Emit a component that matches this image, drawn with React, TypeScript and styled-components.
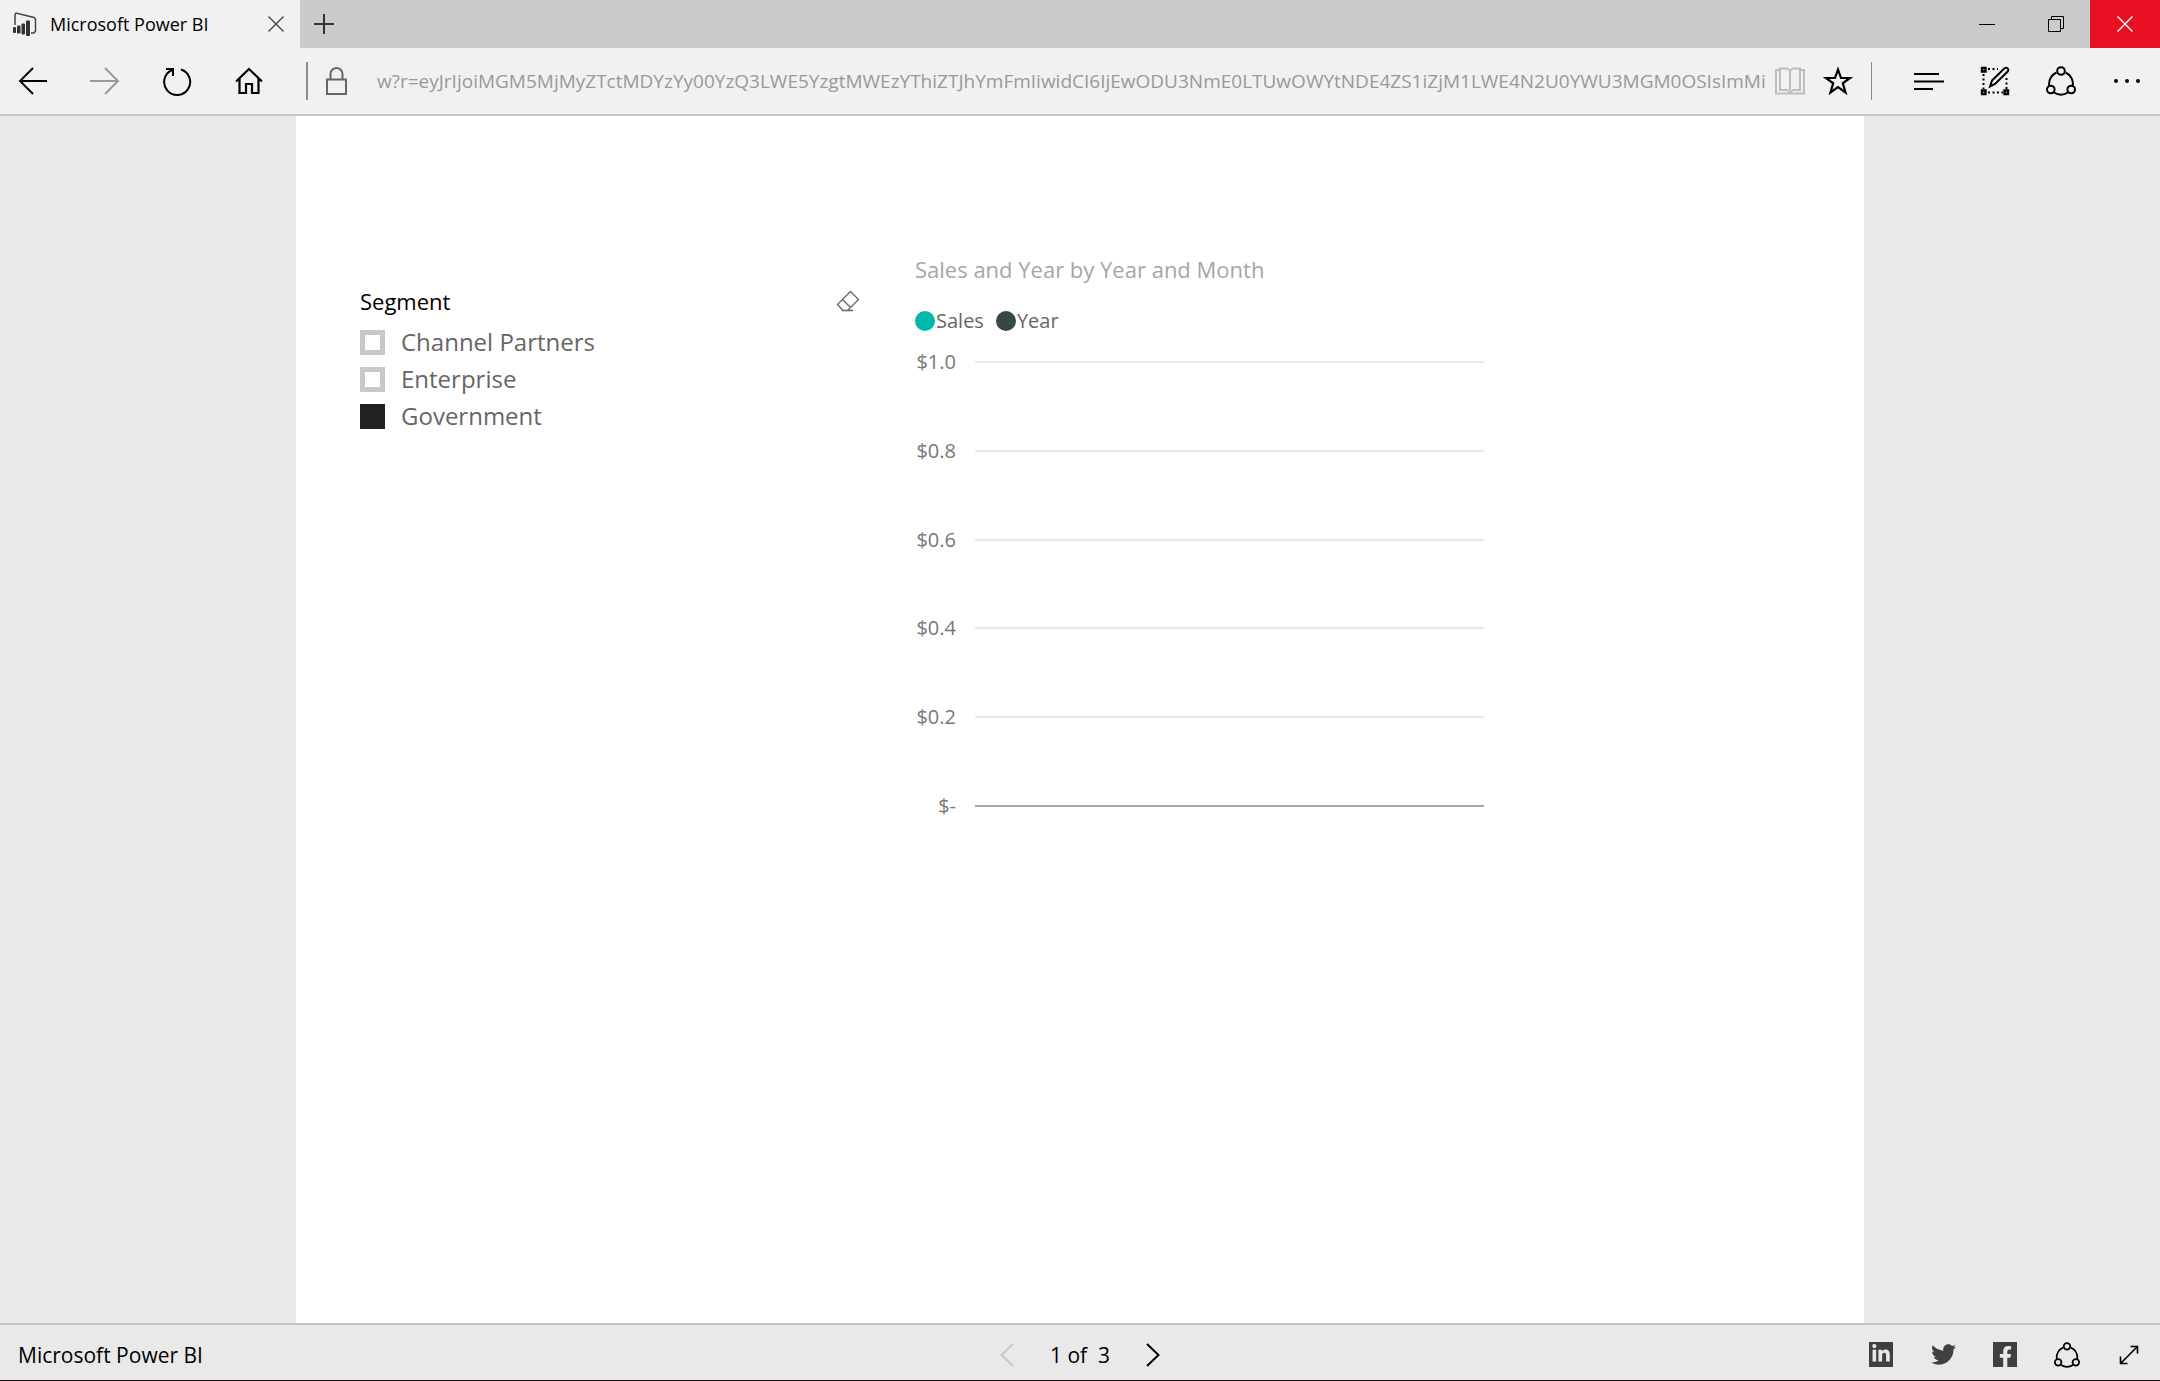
import React, { useState } from "react";
import styled, { createGlobalStyle } from "styled-components";
import { FaFacebookF, FaLinkedinIn, FaTwitter } from "react-icons/fa";

const GlobalStyle = createGlobalStyle`
  * { box-sizing: border-box; }
  body { margin: 0; font-family: "Open Sans", "Noto Sans", sans-serif; color: #000; }
  button, input { font: inherit; color: inherit; }
`;

const Window = styled.div`
  display: flex;
  flex-direction: column;
  min-height: 100vh;
  background: #e9e9e9;
  border-bottom: 1px solid #151010;
`;

const TitleBar = styled.header`
  display: flex;
  height: 48px;
  background: #cbcbcb;
`;

const Tab = styled.div`
  display: flex;
  align-items: center;
  gap: 13px;
  width: 300px;
  padding: 0 16px 0 12px;
  background: #f1f1f1;
  font-size: 18px;
  line-height: 48px;
  white-space: nowrap;
`;

const TabTitle = styled.span`
  flex: 1;
`;

const IconButton = styled.button<{ $width?: number; $color?: string }>`
  display: flex;
  align-items: center;
  justify-content: center;
  flex: none;
  width: ${(p) => p.$width ?? 30}px;
  padding: 0;
  border: 0;
  background: none;
  color: ${(p) => p.$color ?? "#000"};
`;

const WindowButtons = styled.div`
  display: flex;
  margin-left: auto;
`;

const CloseButton = styled(IconButton)`
  background: #e81123;
  color: #fff;
`;

const Toolbar = styled.nav`
  display: flex;
  align-items: center;
  height: 68px;
  padding: 0 18px;
  background: #f1f1f1;
  border-bottom: 2px solid #c8c8c8;
`;

const ToolGroup = styled.div<{ $gap: number }>`
  display: flex;
  align-items: center;
  gap: ${(p) => p.$gap}px;
`;

const Divider = styled.span<{ $thin?: boolean }>`
  flex: none;
  width: ${(p) => (p.$thin ? 1 : 2)}px;
  height: 38px;
  background: #8c8c8c;
`;

const Address = styled.label`
  display: flex;
  align-items: center;
  flex: 1;
  gap: 30px;
  min-width: 0;
  padding: 0 4px 0 18px;
`;

const AddressInput = styled.input`
  flex: 1;
  min-width: 0;
  padding: 0;
  border: 0;
  outline: 0;
  background: none;
  color: #999;
  font-size: 19px;
  line-height: 28px;
`;

const Actions = styled(ToolGroup)`
  padding-left: 42px;
`;

const Stage = styled.main`
  display: flex;
  justify-content: center;
  flex: 1;
`;

const ReportPage = styled.section`
  display: grid;
  grid-template-columns: 500px 571px;
  align-content: start;
  column-gap: 55px;
  width: 100%;
  max-width: 1568px;
  padding: 137px 64px 0;
  background: #fff;
`;

const Slicer = styled.fieldset`
  min-width: 0;
  margin: 0;
  padding: 32px 0 0;
  border: 0;
`;

const SlicerHeader = styled.div`
  display: flex;
  align-items: center;
  justify-content: space-between;
  height: 32px;
  margin-bottom: 6px;
`;

const SlicerTitle = styled.span`
  font-size: 22px;
  line-height: 32px;
`;

const Option = styled.label`
  display: flex;
  align-items: center;
  gap: 16px;
  height: 37px;
  color: #666;
  font-size: 24px;
  line-height: 37px;
`;

const CheckBox = styled.input`
  appearance: none;
  width: 25px;
  height: 25px;
  margin: 2px 0 0;
  border: 5px solid #c8c8c8;
  background: #fff;
  &:checked {
    border-color: #212121;
    background: #212121;
  }
`;

const ChartTitle = styled.h2`
  margin: 0;
  color: #a6a6a6;
  font-size: 22px;
  font-weight: 400;
  line-height: 32px;
`;

const Legend = styled.ul`
  display: flex;
  gap: 12px;
  margin: 22px 0 13px;
  padding: 0;
  list-style: none;
  color: #666;
  font-size: 20px;
  line-height: 28px;
`;

const LegendItem = styled.li<{ $color: string }>`
  display: flex;
  align-items: center;
  gap: 1px;
  &::before {
    content: "";
    width: 20px;
    height: 20px;
    border-radius: 50%;
    background: ${(p) => p.$color};
  }
`;

const Plot = styled.div`
  display: flex;
  flex-direction: column;
  justify-content: space-between;
  height: 472px;
`;

const Tick = styled.div<{ $base: boolean }>`
  display: grid;
  grid-template-columns: 41px 509px;
  align-items: center;
  column-gap: 19px;
  color: #777;
  font-size: 20px;
  line-height: 28px;
  text-align: right;
  &::after {
    content: "";
    height: 2px;
    background: ${(p) => (p.$base ? "#a6a6a6" : "#e9e9e9")};
  }
`;

const Footer = styled.footer`
  display: grid;
  grid-template-columns: 1fr auto 1fr;
  align-items: center;
  height: 57px;
  padding: 4px 18px 0;
  border-top: 2px solid #c3c3c3;
  font-size: 21px;
  font-weight: 500;
  line-height: 28px;
`;

const Pager = styled.div`
  display: flex;
  align-items: center;
  justify-content: space-between;
  width: 160px;
`;

const PageCount = styled.span`
  white-space: pre;
`;

const ShareLinks = styled.div`
  display: flex;
  align-items: center;
  justify-content: flex-end;
  gap: 36px;
`;

const Badge = styled.span<{ $end?: boolean }>`
  display: flex;
  align-items: flex-end;
  justify-content: ${(p) => (p.$end ? "flex-end" : "center")};
  width: 24px;
  height: 25px;
  padding: ${(p) => (p.$end ? "0 1px 0 0" : "0 0 3px")};
  background: #404040;
  color: #e9e9e9;
`;

type IconProps = {
  w: number;
  h: number;
  stroke?: number;
  children: React.ReactNode;
};

const Icon = ({ w, h, stroke = 2, children }: IconProps) => (
  <svg width={w} height={h} viewBox={`0 0 ${w} ${h}`} fill="none" stroke="currentColor" strokeWidth={stroke} aria-hidden="true">
    {children}
  </svg>
);

const PowerBiIcon = () => (
  <Icon w={25} h={26} stroke={1.5}>
    <path d="M3 14V3.500L4 2l18 4.500 1.500 1.500V20l-1.500 2H19" stroke="#444" />
    <g fill="#333" stroke="none">
      <rect x="1" y="16" width="3" height="6" rx="1" />
      <rect x="5" y="14.500" width="3.500" height="8" rx="1" />
      <rect x="9.500" y="12.500" width="3.500" height="11" rx="1" />
      <rect x="14" y="9.500" width="4" height="15.500" rx="1" />
    </g>
  </Icon>
);

const Cross = () => (
  <Icon w={16} h={16} stroke={1.4}>
    <path d="M.5.5l15 15M15.500.5l-15 15" />
  </Icon>
);

const ShareRing = ({ size = 30 }: { size?: number }) => (
  <svg width={size} height={size} viewBox="0 0 30 30" fill="none" stroke="currentColor" strokeWidth="2" aria-hidden="true">
    <path d="M10.500 6.500A12.500 12.500 0 0 0 3.200 19.500M19.500 6.500A12.500 12.500 0 0 1 26.800 19.500M8 26.500a13 13 0 0 0 14 0" />
    <circle cx="15" cy="5" r="3.800" />
    <circle cx="4.800" cy="23.500" r="3.800" />
    <circle cx="25.200" cy="23.500" r="3.800" />
  </svg>
);

const Chevron = ({ back = false }: { back?: boolean }) => (
  <Icon w={14} h={24}>
    <path d={back ? "M13 1L1.500 12 13 23" : "M1 1l11.500 11L1 23"} />
  </Icon>
);

const address =
  "w?r=eyJrIjoiMGM5MjMyZTctMDYzYy00YzQ3LWE5YzgtMWEzYThiZTJhYmFmIiwidCI6IjEwODU3NmE0LTUwOWYtNDE4ZS1iZjM1LWE4N2U0YWU3MGM0OSIsImMi";

const segments = ["Channel Partners", "Enterprise", "Government"];
const ticks = ["$1.0", "$0.8", "$0.6", "$0.4", "$0.2", "$-"];

export default function App() {
  const [selected, setSelected] = useState<string[]>(["Government"]);
  const toggle = (name: string) =>
    setSelected((now) => (now.includes(name) ? now.filter((n) => n !== name) : [...now, name]));

  return (
    <Window>
      <GlobalStyle />
      <TitleBar>
        <Tab>
          <PowerBiIcon />
          <TabTitle>Microsoft Power BI</TabTitle>
          <IconButton $width={16} $color="#444" aria-label="Close tab"><Cross /></IconButton>
        </Tab>
        <IconButton $width={48} $color="#333" aria-label="New tab">
          <Icon w={20} h={20}><path d="M0 10h20M10 0v20" /></Icon>
        </IconButton>
        <WindowButtons>
          <IconButton $width={69} aria-label="Minimize">
            <Icon w={16} h={16} stroke={1}><path d="M0 8.500h16" /></Icon>
          </IconButton>
          <IconButton $width={69} aria-label="Restore">
            <Icon w={16} h={16} stroke={1}><path d="M.5 3.500h12v12H.5zM3.500 3.500v-3h12v12h-3" /></Icon>
          </IconButton>
          <CloseButton $width={70} aria-label="Close"><Cross /></CloseButton>
        </WindowButtons>
      </TitleBar>

      <Toolbar>
        <ToolGroup $gap={42}>
          <IconButton aria-label="Back">
            <Icon w={30} h={28}><path d="M29 14H2M15 1L2 14l13 13" /></Icon>
          </IconButton>
          <IconButton $color="#999" aria-label="Forward">
            <Icon w={30} h={28}><path d="M0 14h28M15 1l13 13-13 13" /></Icon>
          </IconButton>
          <IconButton aria-label="Refresh">
            <Icon w={30} h={30}>
              <path d="M19 3.500A13 13 0 1 1 10 4M4 3h7v7" />
            </Icon>
          </IconButton>
          <IconButton aria-label="Home">
            <Icon w={30} h={28}>
              <path d="M2 14.500L15 2l13 12.500M5.500 11.500V26H12v-9h6v9h6.500V11.500" strokeWidth="2.200" />
            </Icon>
          </IconButton>
          <Divider />
        </ToolGroup>
        <Address>
          <Icon w={21} h={28}>
            <g stroke="#666">
              <path d="M1 12.500h19V27H1zM4.500 12.500V7a6 6 0 0 1 12 0v5.500" />
            </g>
          </Icon>
          <AddressInput aria-label="Address" defaultValue={address} spellCheck={false} />
        </Address>
        <ToolGroup $gap={18}>
          <IconButton $color="#bdbdbd" aria-label="Reading view">
            <Icon w={30} h={28}>
              <path d="M5 3H1v23.500h28V3h-4M15 3v20M5 1.500h7l3 2 3-2h7V23h-7l-3 2-3-2H5z" />
            </Icon>
          </IconButton>
          <IconButton aria-label="Favorites">
            <Icon w={30} h={30}>
              <path d="M15 3.500l3 8.500h9l-7.200 5.300 2.700 9.200-7.500-5.500-7.500 5.500 2.700-9.200L3 12h9z" strokeWidth="2.200" />
            </Icon>
          </IconButton>
          <Divider $thin />
        </ToolGroup>
        <Actions $gap={36}>
          <IconButton aria-label="Hub">
            <Icon w={30} h={20}><path d="M0 3h25M0 10.500h30M0 18h19" /></Icon>
          </IconButton>
          <IconButton aria-label="Make a web note">
            <Icon w={30} h={30}>
              <path d="M2 2h3.500v3.500H2zM2 24.500h3.500V28H2zM24.500 24.500H28V28h-3.500z" strokeWidth="2.400" />
              <path d="M8 3h10M8 26.500h15M3.500 8v15M26.500 12v11" strokeDasharray="2 2.500" />
              <path d="M10 20.500l2-6L24.500 2.300q1.800-1.300 3.200.2 1.200 1.500 0 3L15 18z" />
            </Icon>
          </IconButton>
          <IconButton aria-label="Share"><ShareRing /></IconButton>
          <IconButton aria-label="More">
            <Icon w={30} h={6}>
              <g fill="currentColor" stroke="none">
                <circle cx="4" cy="3" r="2" />
                <circle cx="15" cy="3" r="2" />
                <circle cx="26" cy="3" r="2" />
              </g>
            </Icon>
          </IconButton>
        </Actions>
      </Toolbar>

      <Stage>
        <ReportPage>
          <Slicer aria-label="Segment">
            <SlicerHeader>
              <SlicerTitle>Segment</SlicerTitle>
              <IconButton $width={24} $color="#666" aria-label="Clear selections" onClick={() => setSelected([])}>
                <Icon w={24} h={22} stroke={1.3}>
                  <path d="M1.500 14.500L14.500 1.500l8 8L11.500 20.500H7zM6.500 9.500l8 8M6 20.500h11" />
                </Icon>
              </IconButton>
            </SlicerHeader>
            {segments.map((name) => (
              <Option key={name}>
                <CheckBox type="checkbox" checked={selected.includes(name)} onChange={() => toggle(name)} />
                {name}
              </Option>
            ))}
          </Slicer>

          <section>
            <ChartTitle>Sales and Year by Year and Month</ChartTitle>
            <Legend>
              <LegendItem $color="#01b8aa">Sales</LegendItem>
              <LegendItem $color="#374649">Year</LegendItem>
            </Legend>
            <Plot>
              {ticks.map((label, i) => (
                <Tick key={label} $base={i === ticks.length - 1}>{label}</Tick>
              ))}
            </Plot>
          </section>
        </ReportPage>
      </Stage>

      <Footer>
        <span>Microsoft Power BI</span>
        <Pager>
          <IconButton $width={14} $color="#c8c8c8" aria-label="Previous page"><Chevron back /></IconButton>
          <PageCount>1 of  3</PageCount>
          <IconButton $width={14} aria-label="Next page"><Chevron /></IconButton>
        </Pager>
        <ShareLinks>
          <IconButton $width={26} aria-label="LinkedIn"><Badge><FaLinkedinIn size={20} /></Badge></IconButton>
          <IconButton $width={26} $color="#404040" aria-label="Twitter"><FaTwitter size={25} /></IconButton>
          <IconButton $width={26} aria-label="Facebook"><Badge $end><FaFacebookF size={21} /></Badge></IconButton>
          <IconButton $width={26} aria-label="Share"><ShareRing size={26} /></IconButton>
          <IconButton $width={26} aria-label="Full screen">
            <Icon w={20} h={20} stroke={1.6}><path d="M1.500 18.500l17-17M11.500 1.500h7v7M1.500 11.500v7h7" /></Icon>
          </IconButton>
        </ShareLinks>
      </Footer>
    </Window>
  );
}
